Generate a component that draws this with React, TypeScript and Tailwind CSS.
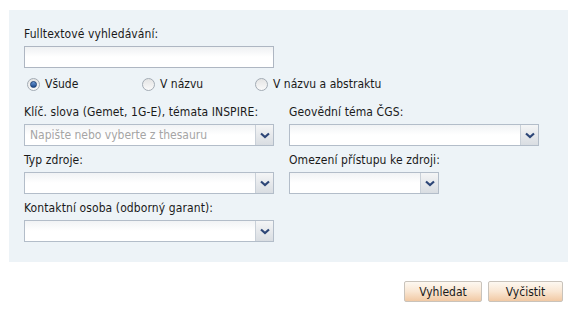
import React from "react";

const font = "font-['DejaVu_Sans_Condensed','DejaVu_Sans',sans-serif]";

const Chevron = () => (
  <svg width="10" height="7" viewBox="0 0 10 7">
    <path d="M1 1.5 L5 5 L9 1.5" fill="none" stroke="#2d4677" strokeWidth="2.2" />
  </svg>
);

const Select = ({ width, placeholder }: { width: string; placeholder?: string }) => (
  <div
    className={`${width} h-[22px] flex border border-[#b3bdc9] bg-gradient-to-b from-[#f1f3f5] via-white to-white`}
  >
    <div className="flex-1 flex items-center pl-[5px] text-[12px] text-[#a5a5a5] overflow-hidden whitespace-nowrap">
      {placeholder}
    </div>
    <div className="w-[18px] flex items-center justify-center border-l border-[#c9d0d8] bg-gradient-to-b from-[#f4f5f6] to-[#d9dde2]">
      <Chevron />
    </div>
  </div>
);

const Field = ({ label, children }: { label: string; children: React.ReactNode }) => (
  <div className="flex flex-col">
    <div className="h-[16px] leading-[16px] text-[12px] text-[#1a1a1a] whitespace-nowrap tracking-[0.1px]">{label}</div>
    <div className="mt-[4px]">{children}</div>
  </div>
);

const Radio = ({ label, checked, width }: { label: string; checked?: boolean; width: string }) => (
  <label className={`${width} flex items-center gap-[5px] text-[12px] text-[#1a1a1a]`}>
    <span className="w-[13px] h-[13px] rounded-full border border-[#a3abb4] bg-gradient-to-b from-[#e4e4e4] to-[#fafafa] flex items-center justify-center">
      {checked && (
        <span className="w-[7px] h-[7px] rounded-full bg-gradient-to-b from-[#6a98d6] to-[#1d4a8c] border border-[#1c3f73]" />
      )}
    </span>
    {label}
  </label>
);

const Button = ({ label, width }: { label: string; width: string }) => (
  <button
    className={`${width} h-[21px] rounded-[2px] border border-[#c9c3bb] bg-gradient-to-b from-[#fdf8f1] via-[#f9e6d2] to-[#f1c9a4] text-[12px] text-[#1a1a1a]`}
  >
    {label}
  </button>
);

export default function App() {
  return (
    <div className={`w-[580px] h-[310px] bg-white pt-[10px] pl-[9px] ${font}`}>
      <div className="w-[559px] h-[252px] bg-[#edf3f7] pt-[16px] pl-[15px]">
        <Field label="Fulltextové vyhledávání:">
          <div className="w-[250px] h-[22px] border border-[#aeb6c2] bg-gradient-to-b from-[#eff1f3] via-white to-white" />
        </Field>
        <div className="flex items-center h-[20px] mt-[6px] mb-[10px] pl-[3px]">
          <Radio label="Všude" checked width="w-[115px]" />
          <Radio label="V názvu" width="w-[113px]" />
          <Radio label="V názvu a abstraktu" width="w-[150px]" />
        </div>
        <div className="flex flex-col gap-[6px]">
          <div className="flex gap-[15px]">
            <Field label="Klíč. slova (Gemet, 1G-E), témata INSPIRE:">
              <Select width="w-[250px]" placeholder="Napište nebo vyberte z thesauru" />
            </Field>
            <Field label="Geovědní téma ČGS:">
              <Select width="w-[250px]" />
            </Field>
          </div>
          <div className="flex gap-[15px]">
            <Field label="Typ zdroje:">
              <Select width="w-[250px]" />
            </Field>
            <Field label="Omezení přístupu ke zdroji:">
              <Select width="w-[150px]" />
            </Field>
          </div>
          <Field label="Kontaktní osoba (odborný garant):">
            <Select width="w-[250px]" />
          </Field>
        </div>
      </div>
      <div className="w-[559px] flex justify-end gap-[6px] pr-[5px] mt-[19px]">
        <Button label="Vyhledat" width="w-[78px]" />
        <Button label="Vyčistit" width="w-[75px]" />
      </div>
    </div>
  );
}
